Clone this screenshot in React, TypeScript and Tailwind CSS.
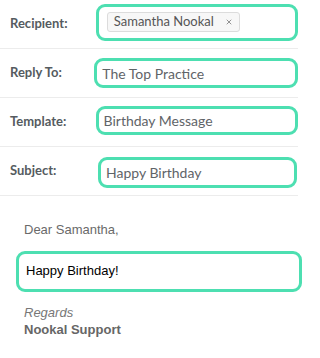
import { X } from 'lucide-react'

const rows = [
  { label: 'Recipient:', value: null, box: 'h-[37px] w-[205px] -mt-[4px]' },
  { label: 'Reply To:', value: 'The Top Practice', box: 'h-[30px] w-[210px]' },
  { label: 'Template:', value: 'Birthday Message', box: 'h-[29px] w-[208px] ml-[1px] -mt-[4px]' },
  { label: 'Subject:', value: 'Happy Birthday', box: 'h-[31px] w-[199px] ml-[1px] mt-[3px]' },
]

export default function App() {
  return (
    <div className="w-[309px] h-[358px] bg-white font-['Lato',sans-serif] overflow-hidden">
      <div className="w-[298px]">
        {rows.map((r) => (
          <div key={r.label} className="flex items-center h-[49px] border-b border-[#ececec]">
            <div className="w-[97px] pl-[10px] text-[13px] font-bold text-[#555b60]">{r.label}</div>
            <div
              className={`${r.box} flex items-center border-[3.5px] border-[#4ddfb1] rounded-[9px] pl-[5px]`}
            >
              {r.value === null ? (
                <div className="flex items-center gap-[11px] h-[20px] ml-[3px] pl-[6px] pr-[6px] bg-[#f7f7f7] border border-[#dcdcdc] rounded-[3px] text-[13px] text-[#555]">
                  <span>Samantha Nookal</span>
                  <X className="w-[8px] h-[8px] text-[#777]" strokeWidth={2.4} />
                </div>
              ) : (
                <span className="text-[14px] text-[#5f6468]">{r.value}</span>
              )}
            </div>
          </div>
        ))}
      </div>
      <div className="font-['Liberation_Sans',Arial,sans-serif]">
        <div className="pl-[24px] pt-[24px] text-[13px] text-[#6a6a6a]">Dear Samantha,</div>
        <div className="mt-[11px] ml-[16px] w-[286px] h-[41px] border-[3.5px] border-[#4ddfb1] rounded-[9px] pl-[7px] pt-[7px] text-[13px] text-black">
          Happy Birthday!
        </div>
        <div className="pl-[24px] mt-[12px] text-[13px] italic text-[#777] leading-[17px]">Regards</div>
        <div className="pl-[24px] text-[13px] font-bold text-[#666] leading-[17px]">Nookal Support</div>
      </div>
    </div>
  )
}
